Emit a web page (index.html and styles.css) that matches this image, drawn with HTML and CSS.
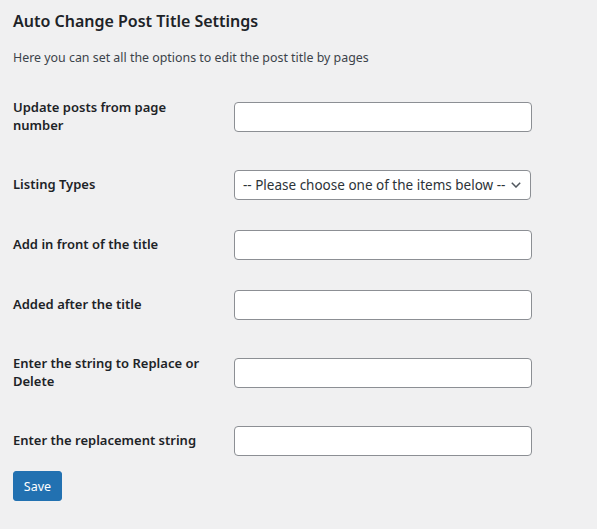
FILE: index.html
```html
<!DOCTYPE html>
<html>
<head>
<meta charset="utf-8">
<link rel="stylesheet" href="styles.css">
</head>
<body>
<div class="wrap">
  <h2 class="title">Auto Change Post Title Settings</h2>
  <p class="intro">Here you can set all the options to edit the post title by pages</p>
  <form class="form-table">
    <div class="row">
      <label class="label">Update posts from page number</label>
      <input class="field" type="text">
    </div>
    <div class="row">
      <label class="label">Listing Types</label>
      <div class="select-wrap">
        <div class="field select">-- Please choose one of the items below --</div>
        <svg class="chevron" width="10" height="6" viewBox="0 0 10 6"><path d="M0.8 0.8 L5 5 L9.2 0.8" fill="none" stroke="#50575e" stroke-width="1.5"/></svg>
      </div>
    </div>
    <div class="row">
      <label class="label">Add in front of the title</label>
      <input class="field" type="text">
    </div>
    <div class="row">
      <label class="label">Added after the title</label>
      <input class="field" type="text">
    </div>
    <div class="row">
      <label class="label">Enter the string to Replace or Delete</label>
      <input class="field" type="text">
    </div>
    <div class="row">
      <label class="label">Enter the replacement string</label>
      <input class="field" type="text">
    </div>
    <button class="button" type="button">Save</button>
  </form>
</div>
</body>
</html>
```
FILE: styles.css
```css
html, body {
  margin: 0;
  padding: 0;
  background: #f0f0f1;
}
body {
  font-family: "Noto Sans", "Open Sans", sans-serif;
  color: #3c434a;
}
.wrap {
  padding: 0 13px;
}
.title {
  margin: 0;
  padding-top: 10px;
  font-size: 16px;
  line-height: 22px;
  font-weight: 600;
  color: #1d2327;
}
.intro {
  margin: 17px 0 0;
  font-size: 12.4px;
  line-height: 18px;
  color: #3c434a;
}
.form-table {
  margin-top: 12px;
  display: flex;
  flex-direction: column;
  align-items: flex-start;
}
.row {
  display: flex;
  align-items: center;
  padding: 15px 0;
}
.label {
  display: block;
  width: 200px;
  margin-right: 21px;
  padding: 4px 0 6px;
  font-size: 13px;
  line-height: 18px;
  font-weight: 600;
  color: #1d2327;
}
.field {
  box-sizing: border-box;
  width: 298px;
  height: 30px;
  margin: 0;
  border: 1px solid #8c8f94;
  border-radius: 4px;
  background: #fff;
  font-family: inherit;
  font-size: 13px;
}
.select-wrap {
  position: relative;
}
.select {
  display: flex;
  align-items: center;
  padding: 0 24px 0 8px;
  color: #2c3338;
  font-size: 13.5px;
  white-space: nowrap;
  overflow: hidden;
  width: 297px;
}
.chevron {
  position: absolute;
  right: 10px;
  top: 12px;
}
.button {
  margin: 0;
  height: 30px;
  width: 49px;
  padding: 0;
  border: 1px solid #2271b1;
  border-radius: 3px;
  background: #2271b1;
  color: #fff;
  font-family: inherit;
  font-size: 12.5px;
}
```
